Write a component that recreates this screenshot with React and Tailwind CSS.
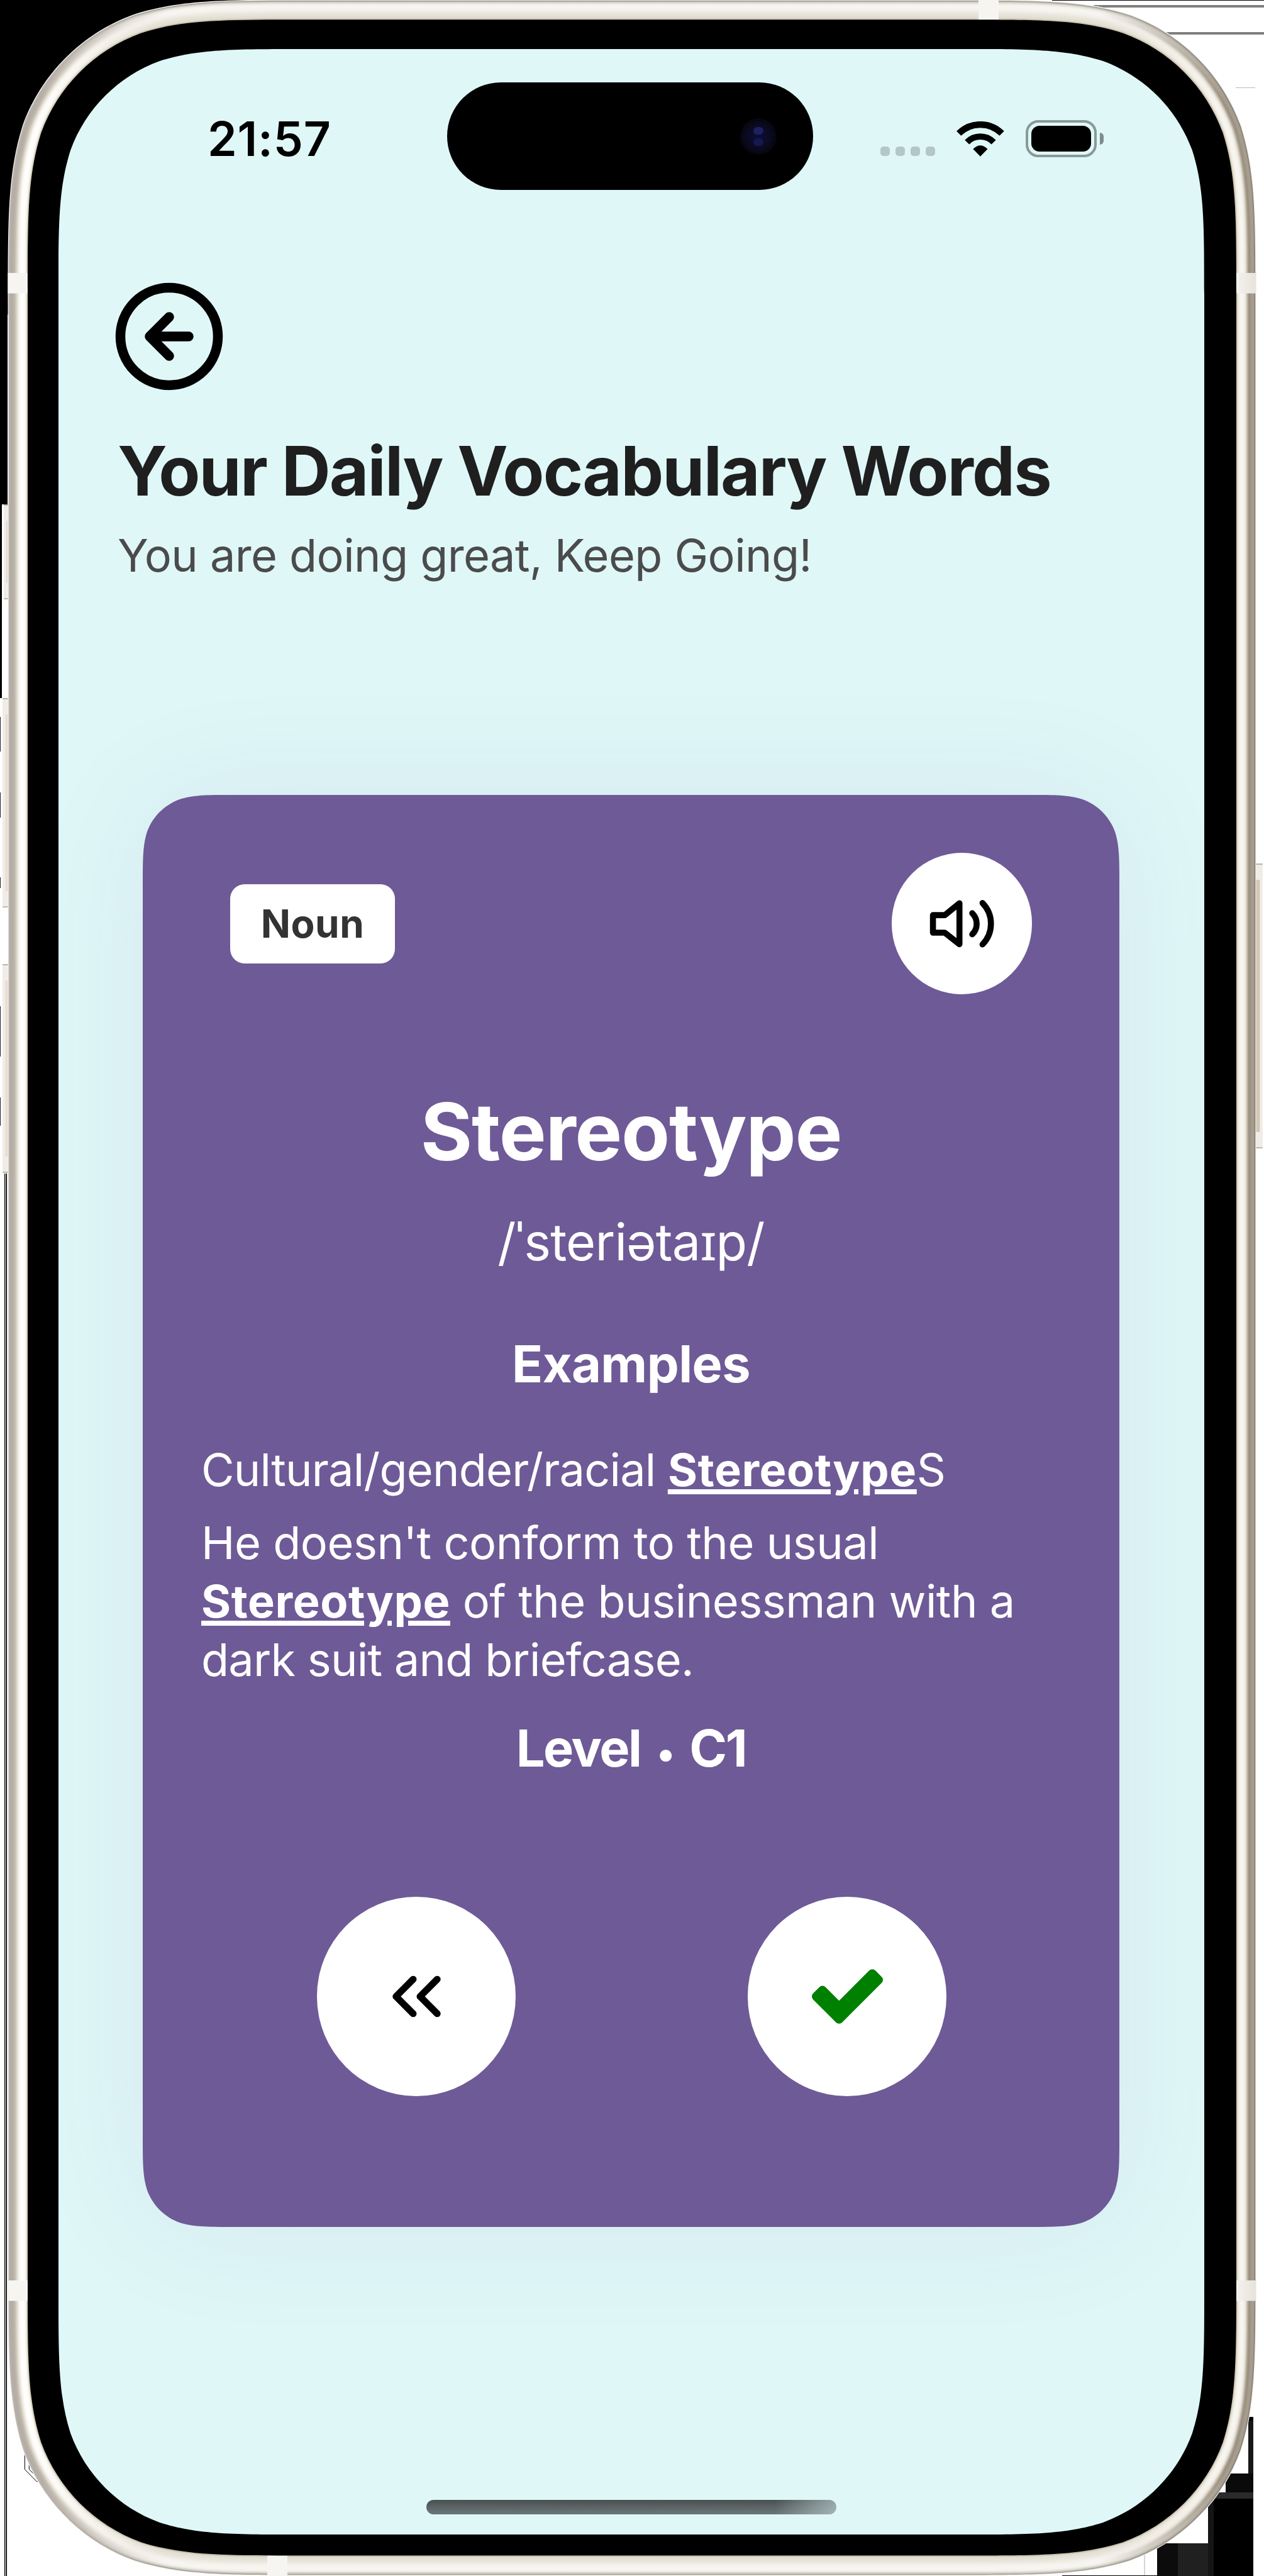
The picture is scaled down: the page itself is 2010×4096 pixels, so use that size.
import React from "react";

// Rounded rectangle with continuous-curvature corners.
function squircle(x, y, w, h, r) {
  const k = [1.52866, 1.08849, 0.86841, 0.63149, 0.07491, 0.37282, 0.16906].map((v) => v * r);
  const [a, b, c, d, e, f, g] = k;
  const R = x + w;
  const B = y + h;
  return [
    `M${x + a} ${y}`,
    `L${R - a} ${y}`,
    `C${R - b} ${y} ${R - c} ${y} ${R - d} ${y + e}`,
    `C${R - f} ${y + g} ${R - g} ${y + f} ${R - e} ${y + d}`,
    `C${R} ${y + c} ${R} ${y + b} ${R} ${y + a}`,
    `L${R} ${B - a}`,
    `C${R} ${B - b} ${R} ${B - c} ${R - e} ${B - d}`,
    `C${R - g} ${B - f} ${R - f} ${B - g} ${R - d} ${B - e}`,
    `C${R - c} ${B} ${R - b} ${B} ${R - a} ${B}`,
    `L${x + a} ${B}`,
    `C${x + b} ${B} ${x + c} ${B} ${x + d} ${B - e}`,
    `C${x + f} ${B - g} ${x + g} ${B - f} ${x + e} ${B - d}`,
    `C${x} ${B - c} ${x} ${B - b} ${x} ${B - a}`,
    `L${x} ${y + a}`,
    `C${x} ${y + b} ${x} ${y + c} ${x + e} ${y + d}`,
    `C${x + g} ${y + f} ${x + f} ${y + g} ${x + d} ${y + e}`,
    `C${x + c} ${y} ${x + b} ${y} ${x + a} ${y}Z`,
  ].join(" ");
}

// Metal band shading, listed from the outer edge inwards: left, top/bottom, right.
const BAND = [
  ["#b9b3ad", "#aaa59b", "#8d8578"],
  ["#b6aea6", "#d3cfc6", "#a69d8f"],
  ["#b5ada5", "#e9e6df", "#a69d8f"],
  ["#b7b0a7", "#f4f2ed", "#a2998a"],
  ["#bdb6ab", "#f7f5f1", "#998f80"],
  ["#cbc4b8", "#f7f5f1", "#a59b8c"],
  ["#ddd7cb", "#f6f4ef", "#c4bcae"],
  ["#ece8de", "#f4f1ec", "#e3ddd1"],
  ["#f8f6f1", "#f1eee7", "#f0ede5"],
  ["#fefdfb", "#ece9e1", "#f6f4ee"],
  ["#fffefd", "#e9e5dc", "#f7f5f0"],
  ["#fffefc", "#e6e2d8", "#f7f5f0"],
  ["#fdfbf8", "#e4dfd4", "#f3f0e9"],
  ["#f6f2ea", "#e1dcd0", "#ebe5d9"],
  ["#d9d1c0", "#cbc5b0", "#d2c8b3"],
];

function Backdrop() {
  return (
    <svg className="absolute inset-0" width="2010" height="4096" viewBox="0 0 2010 4096" aria-hidden="true">
      <rect width="2010" height="4096" fill="#fff" />
      <path d="M0 0H400V300H200V500H12V802H3V1110H0Z" fill="#000" />
      <path d="M1673 .5H2010M1739 9H2010M1747 11H2010M1843 52H2010M1847 54H2010" stroke="#000" strokeWidth="1.2" />
      <path d="M1965 139.500H1996" stroke="#bbb" />
      <path d="M.5 1140V1195M.5 1260V1300M.5 1395V1412M.5 1600V1680M.5 1745V1790" stroke="#222" />
      <path d="M7.600 1866V4096" stroke="#000" strokeWidth="1.300" />
      <path d="M10.200 1866V4096" stroke="#000" strokeWidth="1.700" />
      <path
        d="M39.400 3890V3926.500L58.200 3945.700H68.500M46.300 3907V3926.500L58.700 3938.600H63M126 4012L137.500 4023.400"
        fill="none"
        stroke="#000"
        strokeWidth="1"
      />
      <rect x="1985" y="3843" width="8" height="90" fill="#171717" />
      <rect x="1986" y="3843" width="7" height="6" fill="#000" />
      <rect x="1949" y="3933" width="44" height="30" fill="#0a0a0a" />
      <rect x="1930" y="3963" width="63" height="10" fill="#2a2a2a" />
      <rect x="1921" y="3973" width="9" height="123" fill="#151515" />
      <rect x="1930" y="3973" width="63" height="123" fill="#000" />
      <rect x="1873" y="4044" width="48" height="52" fill="#202020" />
      <rect x="1840" y="4044" width="33" height="52" fill="#0c0c0c" />
      <path d="M1689 4095.500H1840" stroke="#000" />
      <path d="M1820 4056V4095" stroke="#aaa" />
    </svg>
  );
}

function SideButton({ x, y, w, h, flip }) {
  return (
    <g>
      <rect x={x} y={y} width={w} height={h} rx="4" fill="#f1ede6" />
      <rect
        x={flip ? x : x + w * 0.4}
        y={y + 26}
        width={w * 0.62}
        height={h - 52}
        fill={flip ? "#d3c8b5" : "#e6ded2"}
      />
      <rect x={x} y={y} width={w} height="2" rx="1" fill="#b9b2a6" />
      <rect x={x} y={y + h - 2} width={w} height="2" rx="1" fill="#c2b7a6" />
    </g>
  );
}

function DeviceFrame() {
  const n = BAND.length;
  const bezel = squircle(44, 31.3, 1922, 4032.2, 285);
  const screen = squircle(93, 78, 1822, 3952, 255);
  return (
    <svg
      className="pointer-events-none absolute inset-0"
      width="2010"
      height="4096"
      viewBox="0 0 2010 4096"
      aria-hidden="true"
    >
      <defs>
        {BAND.map(([l, m, r], i) => (
          <linearGradient key={i} id={`band${i}`} gradientUnits="userSpaceOnUse" x1="0" x2="2010" y1="0" y2="0">
            <stop offset="0.03" stopColor={l} />
            <stop offset="0.13" stopColor={m} />
            <stop offset="0.87" stopColor={m} />
            <stop offset="0.97" stopColor={r} />
          </linearGradient>
        ))}
        <linearGradient id="antennaRight">
          <stop offset="0" stopColor="#f4f2ed" />
          <stop offset="1" stopColor="#e7e3db" />
        </linearGradient>
      </defs>
      <path d="M4 1110H15V1866H4ZM4 953H15V1110H4Z" fill="#fff" />
      <SideButton x={6} y={802} w={9} h={151} />
      <SideButton x={4} y={1110} w={11} h={333} />
      <SideButton x={4} y={1533} w={11} h={332} />
      <SideButton x={1996} y={1373} w={12} h={453} flip />
      <path d={`${squircle(12.5, -0.5, 1985, 4096, 316)} ${bezel}`} fillRule="evenodd" fill="#f4f4f4" />
      {BAND.map((_, i) => {
        const t = i / n;
        const x = 13.7 + 30.3 * t;
        const y = 0.8 + 30.5 * t;
        const right = 1996.4 - 30.4 * t;
        const bottom = 4094.5 - 31 * t;
        return (
          <path
            key={i}
            d={`${squircle(x, y, right - x, bottom - y, 315 - 30 * t)} ${bezel}`}
            fillRule="evenodd"
            fill={`url(#band${i})`}
          />
        );
      })}
      <g fill="#f6f5f2">
        <rect x="12.500" y="434" width="32" height="32.500" />
        <rect x="12.500" y="3626" width="32" height="32.500" />
        <rect x="1556" y="0" width="32" height="31.500" />
        <rect x="425" y="4063.500" width="32" height="32.500" />
      </g>
      <rect x="1965.500" y="434" width="32" height="32.500" fill="url(#antennaRight)" />
      <rect x="1965.500" y="3626" width="32" height="32.500" fill="url(#antennaRight)" />
      <path d={`${bezel} ${screen}`} fillRule="evenodd" fill="#000" />
    </svg>
  );
}

function StatusIcons() {
  return (
    <div className="ml-[107px] mt-[60px] flex h-[59px] items-start">
      <div className="mt-[42px] flex gap-[9px]">
        <span className="h-[15px] w-[15px] rounded-[5px] bg-[#b3c7c7]" />
        <span className="h-[15px] w-[15px] rounded-[5px] bg-[#b3c7c7]" />
        <span className="h-[15px] w-[15px] rounded-[5px] bg-[#b3c7c7]" />
        <span className="h-[15px] w-[15px] rounded-[5px] bg-[#b3c7c7]" />
      </div>
      <svg className="ml-[34px] mt-[2px] h-[56px] w-[76px]" viewBox="427 450 177.500 131" aria-label="Wi-Fi">
        <g fill="none" stroke="#000">
          <path d="M435.500 495A113 113 0 0 1 595.500 495" strokeWidth="24" />
          <path d="M466 527.500A69 69 0 0 1 565 527.500" strokeWidth="23" />
        </g>
        <path d="M488.500 553Q515.500 526 542.500 553L515.500 580.500Z" />
      </svg>
      <div className="ml-[34px] flex items-center">
        <div className="h-[59px] w-[113px] rounded-[20px] border-[4px] border-[#8b9898] p-[5px]">
          <div className="h-full w-full rounded-[13px] bg-black" />
        </div>
        <div className="ml-[5px] h-[19px] w-[6px] rounded-r-[6px] bg-[#7f8c8c]" />
      </div>
    </div>
  );
}

function StatusBar() {
  return (
    <div className="flex h-[171px] items-start">
      <div className="ml-[237px] mt-[50px] w-[381px] whitespace-nowrap text-[75px] leading-[80px] font-semibold tracking-[0.8px]">
        21:57
      </div>
      <div className="flex h-[171px] w-[582px] items-center justify-end rounded-full bg-black pr-[58px]">
        <div className="flex h-[58px] w-[58px] items-center justify-center rounded-full bg-[radial-gradient(circle,#0d0e38_0%,#0a0a22_45%,#050509_75%)]">
          <div className="flex h-[30px] w-[16px] flex-col justify-between">
            <span className="h-[12px] w-[16px] rounded-full bg-[#1c2160]" />
            <span className="h-[12px] w-[16px] rounded-full bg-[#14184c]" />
          </div>
        </div>
      </div>
      <StatusIcons />
    </div>
  );
}

function BackIcon() {
  return (
    <svg
      className="h-[186px] w-[186px]"
      viewBox="0 0 24 24"
      fill="none"
      stroke="#000"
      strokeWidth="2"
      strokeLinecap="round"
      strokeLinejoin="round"
    >
      <circle cx="12" cy="12" r="10" />
      <path d="M12 8l-4 4 4 4M16 12H8" />
    </svg>
  );
}

function Keyword() {
  return (
    <span className="font-bold tracking-[0.6px] underline decoration-[8px] underline-offset-[5px]">Stereotype</span>
  );
}

function WordCard() {
  return (
    <div className="mx-[134px] mt-[336px] h-[2277px] w-[1553px] rounded-[100px] shadow-[0_0_190px_rgba(110,90,151,0.09)]">
      <div
        className="flex h-full flex-col bg-[#6e5a97] pt-[92px] text-white"
        style={{ clipPath: `path("${squircle(0, 0, 1553, 2277, 92.7)}")` }}
      >
        <div className="flex h-[225px] items-center justify-between px-[139px]">
          <div className="flex h-[126px] w-[262px] items-center justify-center rounded-[23px] bg-white text-[62px] leading-none font-bold tracking-[0.5px] text-[#333]">
            Noun
          </div>
          <button className="flex h-[225px] w-[223px] items-center justify-center rounded-full bg-white">
            <svg
              className="h-[86px] w-[114px]"
              viewBox="338 410 560 422"
              fill="none"
              stroke="#000"
              strokeWidth="47"
              strokeLinecap="round"
              strokeLinejoin="round"
            >
              <path d="M390 553H482L597 460V780L482 690H390Z" />
              <path d="M697 538A116 116 0 0 1 697 703" />
              <path d="M777 458A232 232 0 0 1 777 782" />
            </svg>
          </button>
        </div>
        <h2 className="mt-[143px] text-center text-[126px] leading-[150px] font-bold tracking-[-1.3px]">Stereotype</h2>
        <p className="mt-[51px] text-center text-[81px] leading-[100px] tracking-[-0.8px]">/ˈsteriətaɪp/</p>
        <h3 className="mt-[94px] text-center text-[81px] leading-[100px] font-bold tracking-[-0.6px]">Examples</h3>
        <p className="mt-[71px] pl-[93px] text-[72px] leading-[93px] tracking-[-0.8px] whitespace-nowrap">
          Cultural/gender/racial <Keyword />S
        </p>
        <p className="mt-[23px] pl-[93px] text-[72px] leading-[93px] tracking-[-0.5px] whitespace-nowrap">
          He doesn't conform to the usual
          <br />
          <Keyword /> of the businessman with a
          <br />
          <span className="tracking-[-0.75px]">dark suit and briefcase.</span>
        </p>
        <h3 className="mt-[45px] text-center text-[81px] leading-[100px] font-bold tracking-[-2.4px]">
          Level <span className="mx-[9px] text-[60px] leading-none">•</span> C1
        </h3>
        <div className="mt-[186px] flex gap-[369px] pl-[277px]">
          <button className="flex h-[317px] w-[316px] items-center justify-center rounded-full bg-white">
            <svg
              className="h-[131px] w-[131px]"
              viewBox="0 0 24 24"
              fill="none"
              stroke="#000"
              strokeWidth="2"
              strokeLinecap="round"
              strokeLinejoin="round"
            >
              <path d="M11 17l-5-5 5-5M18 17l-5-5 5-5" />
            </svg>
          </button>
          <button className="flex h-[317px] w-[316px] items-center justify-center rounded-full bg-white">
            <svg className="h-[87px] w-[113px]" viewBox="121 334 1550 1188" fill="#008000">
              <path d="M1671 566q0 40-28 68l-724 724-136 136q-28 28-68 28t-68-28l-136-136-362-362q-28-28-28-68t28-68l136-136q28-28 68-28t68 28l294 295 656-657q28-28 68-28t68 28l136 136q28 28 28 68z" />
            </svg>
          </button>
        </div>
      </div>
    </div>
  );
}

export default function App() {
  return (
    <div className="relative h-[4096px] w-[2010px] overflow-hidden bg-white font-['Inter','Noto_Sans',sans-serif] text-black">
      <Backdrop />
      <div className="relative px-[93px] pt-[78px]">
        <div className="flex h-[3952px] w-[1822px] flex-col overflow-hidden rounded-[220px] bg-[#dff7f7] pt-[53px]">
          <StatusBar />
          <button className="mt-[140px] ml-[83px] self-start">
            <BackIcon />
          </button>
          <h1 className="mt-[61px] ml-[94px] text-[108px] leading-[120px] font-bold tracking-[-1.9px] whitespace-nowrap text-[#1f1f1f]">
            Your Daily Vocabulary Words
          </h1>
          <p className="mt-[29px] ml-[94px] text-[72px] leading-[90px] tracking-[-0.6px] whitespace-nowrap text-[#4b4b4b]">
            You are doing great, Keep Going!
          </p>
          <WordCard />
          <div className="mt-[434px] ml-[585px] h-[23px] w-[652px] rounded-full bg-[linear-gradient(90deg,transparent_85%,rgba(200,222,222,0.6)_100%),linear-gradient(180deg,#48504f,#5b6466_50%,#6b7777)]" />
        </div>
      </div>
      <DeviceFrame />
    </div>
  );
}
